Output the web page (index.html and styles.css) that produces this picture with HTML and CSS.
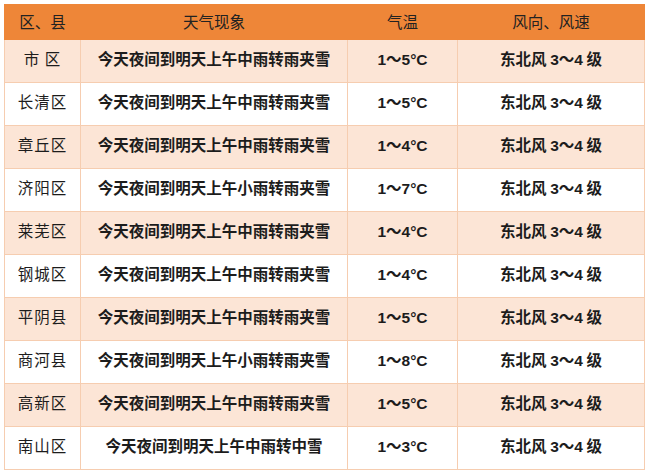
FILE: index.html
```html
<!DOCTYPE html>
<html lang="zh-CN">
<head>
<meta charset="utf-8">
<link rel="stylesheet" href="styles.css">
</head>
<body>
<table class="wx">
  <colgroup>
    <col class="c1"><col class="c2"><col class="c3"><col class="c4">
  </colgroup>
  <thead>
    <tr><th>区、县</th><th>天气现象</th><th>气温</th><th>风向、风速</th></tr>
  </thead>
  <tbody>
    <tr class="odd"><td class="area">市&nbsp;区</td><td class="desc">今天夜间到明天上午中雨转雨夹雪</td><td class="temp">1～5°C</td><td class="wind">东北风 <span class="num">3～4</span> 级</td></tr>
    <tr><td class="area">长清区</td><td class="desc">今天夜间到明天上午中雨转雨夹雪</td><td class="temp">1～5°C</td><td class="wind">东北风 <span class="num">3～4</span> 级</td></tr>
    <tr class="odd"><td class="area">章丘区</td><td class="desc">今天夜间到明天上午中雨转雨夹雪</td><td class="temp">1～4°C</td><td class="wind">东北风 <span class="num">3～4</span> 级</td></tr>
    <tr><td class="area">济阳区</td><td class="desc">今天夜间到明天上午小雨转雨夹雪</td><td class="temp">1～7°C</td><td class="wind">东北风 <span class="num">3～4</span> 级</td></tr>
    <tr class="odd"><td class="area">莱芜区</td><td class="desc">今天夜间到明天上午中雨转雨夹雪</td><td class="temp">1～4°C</td><td class="wind">东北风 <span class="num">3～4</span> 级</td></tr>
    <tr><td class="area">钢城区</td><td class="desc">今天夜间到明天上午中雨转雨夹雪</td><td class="temp">1～4°C</td><td class="wind">东北风 <span class="num">3～4</span> 级</td></tr>
    <tr class="odd"><td class="area">平阴县</td><td class="desc">今天夜间到明天上午中雨转雨夹雪</td><td class="temp">1～5°C</td><td class="wind">东北风 <span class="num">3～4</span> 级</td></tr>
    <tr><td class="area">商河县</td><td class="desc">今天夜间到明天上午小雨转雨夹雪</td><td class="temp">1～8°C</td><td class="wind">东北风 <span class="num">3～4</span> 级</td></tr>
    <tr class="odd"><td class="area">高新区</td><td class="desc">今天夜间到明天上午中雨转雨夹雪</td><td class="temp">1～5°C</td><td class="wind">东北风 <span class="num">3～4</span> 级</td></tr>
    <tr><td class="area">南山区</td><td class="desc">今天夜间到明天上午中雨转中雪</td><td class="temp">1～3°C</td><td class="wind">东北风 <span class="num">3～4</span> 级</td></tr>
  </tbody>
</table>
</body>
</html>
```
FILE: styles.css
```css
html, body {
  margin: 0;
  padding: 0;
  background: #ffffff;
}
body {
  padding: 4px 0 0 4px;
  font-family: "Noto Sans CJK SC", "Liberation Sans", sans-serif;
  color: #1c1c1c;
}
.wx {
  border-collapse: collapse;
  table-layout: fixed;
  width: 640px;
}
.c1 { width: 76px; }
.c2 { width: 267px; }
.c3 { width: 110px; }
.c4 { width: 187px; }
.wx th {
  background: #ee8638;
  height: 32px;
  padding: 0 0 2px;
  font-weight: 400;
  font-size: 15.5px;
  text-align: center;
  color: #222;
  border: 1px solid #ee8638;
}
.wx td {
  height: 36px;
  padding: 0 0 6px;
  text-align: center;
  font-size: 15.5px;
  border: 1px solid #f6cdb0;
}
.wx tr.odd td {
  background: #fce5d6;
}
.area {
  font-weight: 400;
  letter-spacing: 1px;
}
.desc {
  font-weight: 700;
}
.temp {
  font-family: "Liberation Sans", "Noto Sans CJK SC", sans-serif;
  font-weight: 700;
  font-size: 16px;
}
.wind {
  font-weight: 700;
}
.num {
  font-family: "Liberation Sans", "Noto Sans CJK SC", sans-serif;
  font-weight: 700;
}
```
